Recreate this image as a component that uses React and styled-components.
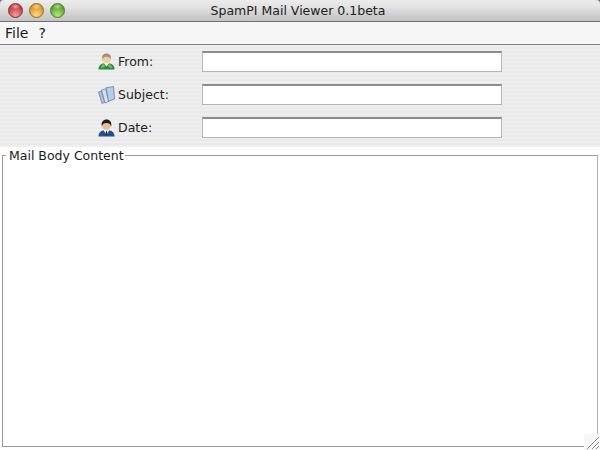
import React from 'react';
import styled, { createGlobalStyle } from 'styled-components';

const GlobalStyle = createGlobalStyle`
  html, body {
    margin: 0;
    padding: 0;
    background: #fff;
  }
  * {
    box-sizing: border-box;
  }
`;

const Window = styled.div`
  width: 600px;
  height: 450px;
  display: flex;
  flex-direction: column;
  overflow: hidden;
  background: #777;
  font-family: "DejaVu Sans", sans-serif;
  color: #1a1a1a;
`;

const TitleBar = styled.div`
  height: 22px;
  flex: none;
  display: flex;
  align-items: center;
  padding-left: 8px;
  gap: 6px;
  background: linear-gradient(#ececec, #e2e2e2 35%, #cfcfcf 70%, #c4c4c4);
  border-bottom: 1px solid #6f6f6f;
  border-radius: 4px 4px 0 0;
`;

const Light = styled.span`
  width: 15px;
  height: 15px;
  border-radius: 50%;
  border: 1px solid ${(p) => p.$edge};
  background:
    radial-gradient(ellipse 5px 3px at 50% 18%, rgba(255, 255, 255, 0.55), transparent),
    radial-gradient(circle at 50% 85%, ${(p) => p.$glow}, ${(p) => p.$base} 70%);
`;

const Title = styled.div`
  flex: 1;
  text-align: center;
  font-size: 12.5px;
  padding-right: 75px;
  color: #222;
`;

const MenuBar = styled.div`
  height: 23px;
  flex: none;
  display: flex;
  align-items: center;
  gap: 10px;
  padding-left: 5px;
  font-size: 14px;
  background: #f6f6f6;
  border-bottom: 1px solid #808080;
`;

const FormPanel = styled.div`
  height: 102px;
  flex: none;
  display: flex;
  flex-direction: column;
  background: repeating-linear-gradient(#efefef 0 2px, #e9e9e9 2px 4px);
`;

const Row = styled.div`
  height: 33px;
  display: flex;
  align-items: center;
  padding-left: 98px;
`;

const Label = styled.label`
  width: 104px;
  display: flex;
  align-items: center;
  gap: 3px;
  font-size: 12.5px;
  color: #222;
`;

const TextBox = styled.div`
  width: 300px;
  height: 21px;
  background: #fff;
  border: 1px solid #b4b4b4;
  border-top: 2px solid #8c8c8c;
`;

const Body = styled.div`
  flex: 1;
  position: relative;
  background: #fff;
  padding: 2px 0 3px 2px;
`;

const Fieldset = styled.fieldset`
  margin: 0;
  padding: 0;
  height: 100%;
  width: 596px;
  border: 1px solid #9a9a9a;
  border-right-color: #b4b4b4;
  min-inline-size: 0;
`;

const Legend = styled.legend`
  margin-left: 3px;
  padding: 0 1px 0 3px;
  font-size: 12.5px;
  line-height: 13px;
  color: #1a1a1a;
`;

const Grip = styled.svg`
  position: absolute;
  right: 0;
  bottom: 0;
  width: 16px;
  height: 16px;
  background: #f7f7f7;
`;

const FromIcon = () => (
  <svg width="17" height="17" viewBox="0 0 17 17">
    <path d="M.5 16.500c0-4 2.500-6.500 8-6.500s8 2.500 8 6.500z" fill="#2f8a3e" />
    <path d="M3 15c0-2 1-3.500 3-4l1 3zM14 15c0-2-1-3.500-3-4l-1 3z" fill="#6cc070" />
    <path d="M5.500 10l3 3.500 3-3.500z" fill="#f5edd2" />
    <circle cx="8.500" cy="6" r="4.300" fill="#efcda8" />
    <path d="M4.200 6.500C3.500 2 6 .5 8.500.5s5 1.500 4.300 6c-.8-2-2-2.800-4.300-2.800S5 4.500 4.200 6.500z" fill="#a98f72" />
  </svg>
);

const SubjectIcon = () => (
  <svg width="17" height="18" viewBox="0 0 17 18">
    <path d="M.5 6l3-1 3.500 11-3 1.500z" fill="#a8bfdd" stroke="#5f7ba6" strokeWidth=".7" />
    <path d="M3.500 4l4-1.200 3.500 12.500-4 1.700z" fill="#d5e1f0" stroke="#5f7ba6" strokeWidth=".7" />
    <path d="M8 1.800l7.500-1.300 1 12.500-6 2.300z" fill="#b9cde8" stroke="#55719e" strokeWidth=".7" />
  </svg>
);

const DateIcon = () => (
  <svg width="17" height="18" viewBox="0 0 17 18">
    <path d="M.5 17.500c0-4 2.500-6.500 8-6.500s8 2.500 8 6.500z" fill="#23508f" />
    <path d="M5.500 11l3 5 3-5z" fill="#f4f4f4" />
    <path d="M8 12h1l.5 4h-2z" fill="#16305c" />
    <circle cx="8.500" cy="6.500" r="4.400" fill="#e9bf98" />
    <path d="M3.800 7.500C3 2.500 5.500.5 8.500.5s5.500 2 4.700 7c-1-2.800-2-3.500-4.700-3.500S4.800 4.700 3.800 7.500z" fill="#1c1c1c" />
  </svg>
);

const fields = [
  { label: 'From:', Icon: FromIcon },
  { label: 'Subject:', Icon: SubjectIcon },
  { label: 'Date:', Icon: DateIcon },
];

const App = () => (
  <Window>
    <GlobalStyle />
    <TitleBar>
      <Light $base="#c4383c" $glow="#f2a0a0" $edge="#7c3334" />
      <Light $base="#dc9420" $glow="#f9dc86" $edge="#8a6a2a" />
      <Light $base="#58a02c" $glow="#b5e67e" $edge="#4c7a30" />
      <Title>SpamPI Mail Viewer 0.1beta</Title>
    </TitleBar>
    <MenuBar>
      <span>File</span>
      <span>?</span>
    </MenuBar>
    <FormPanel>
      {fields.map(({ label, Icon }) => (
        <Row key={label}>
          <Label>
            <Icon />
            {label}
          </Label>
          <TextBox />
        </Row>
      ))}
    </FormPanel>
    <Body>
      <Fieldset>
        <Legend>Mail Body Content</Legend>
      </Fieldset>
      <Grip viewBox="0 0 16 16">
        <path d="M3 15L15 3M8 15l7-7M12 15l3-3" stroke="#8a8a8a" strokeWidth="1" fill="none" />
      </Grip>
    </Body>
  </Window>
);

export default App;
